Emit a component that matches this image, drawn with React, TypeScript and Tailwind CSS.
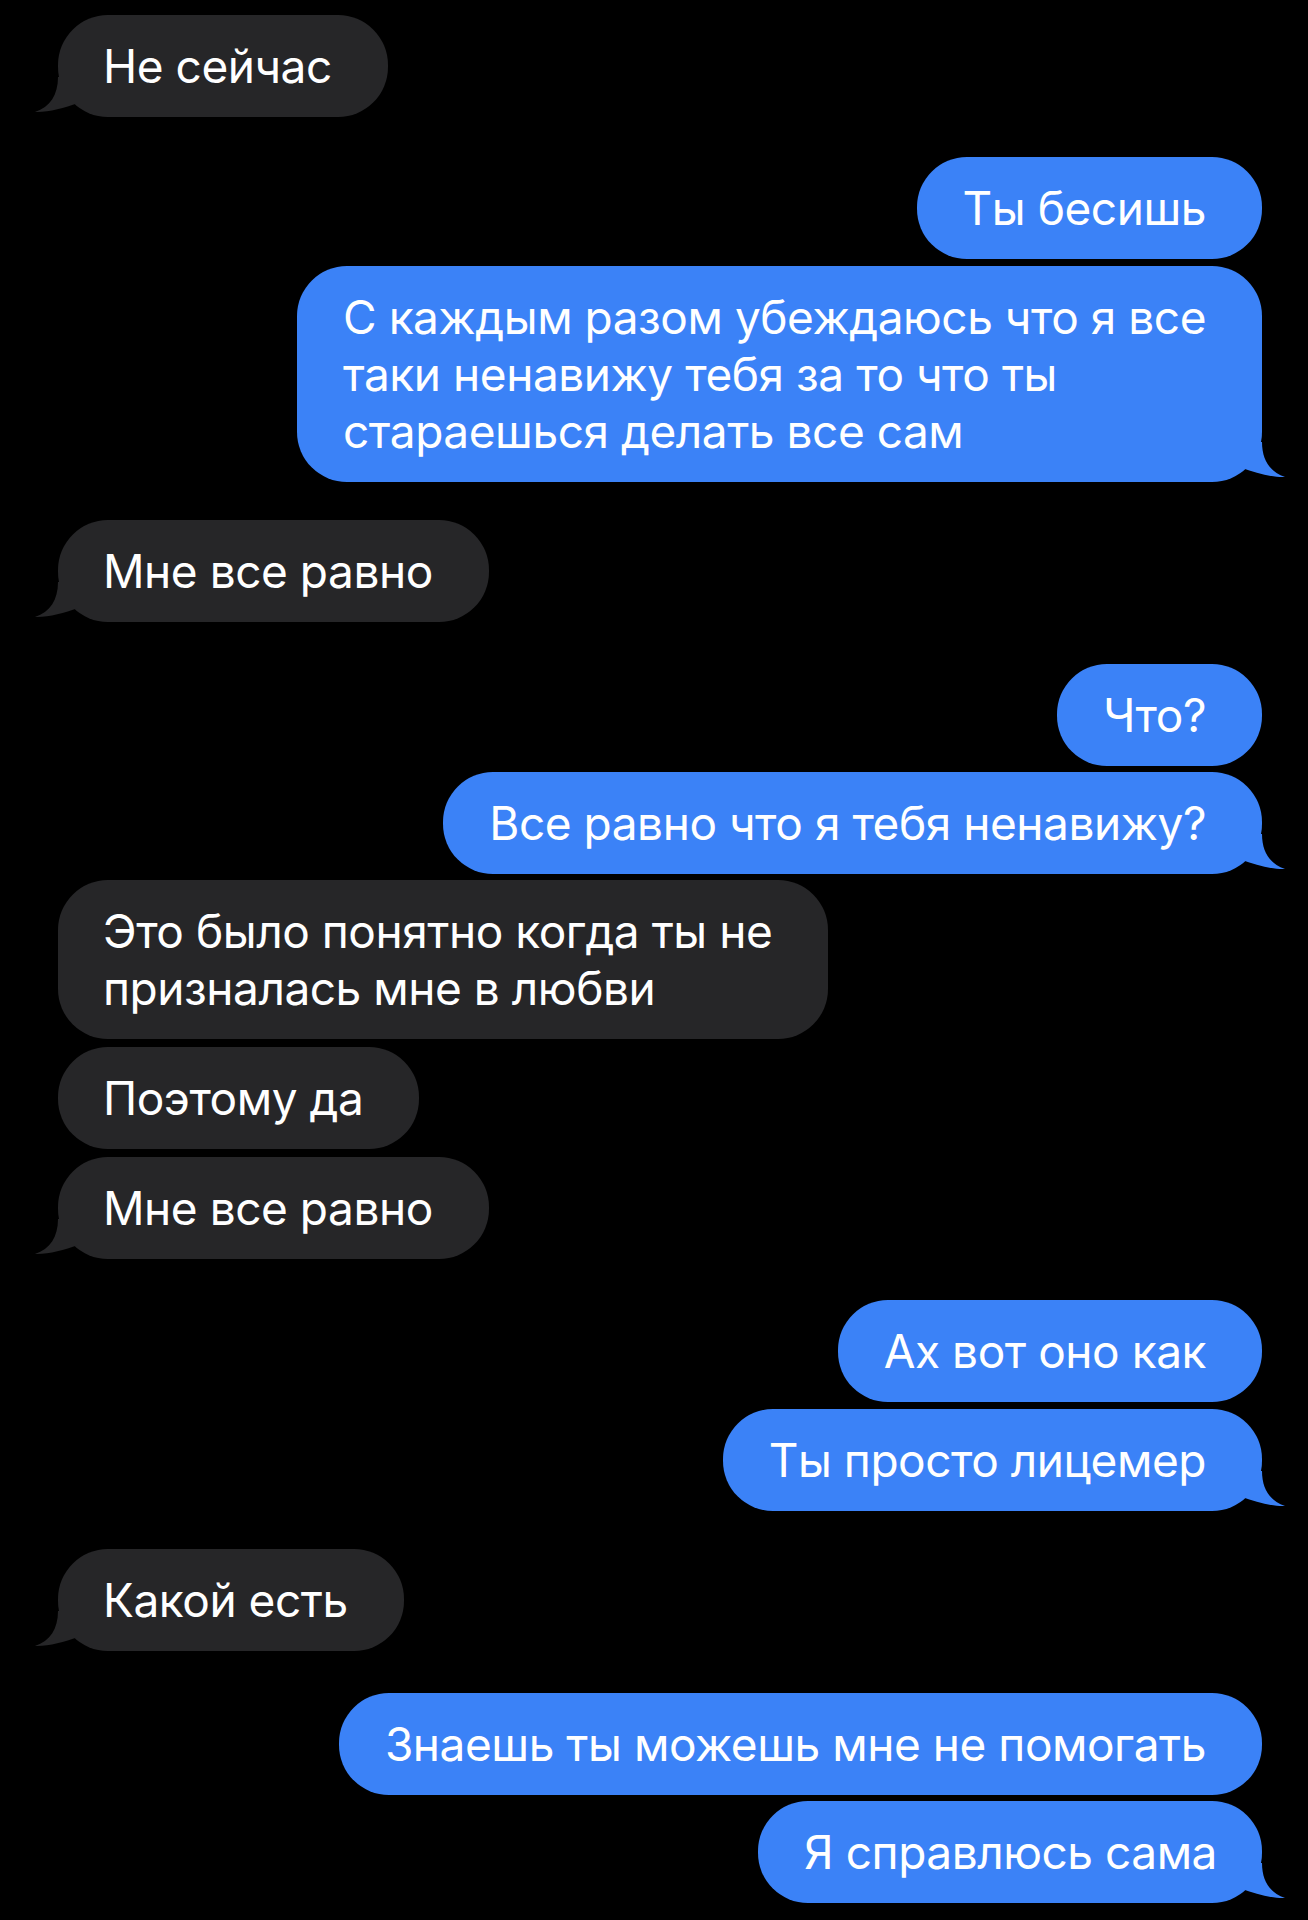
import type { ReactNode } from "react";

type Message = {
  id: number;
  side: "in" | "out";
  lines: string[];
  tail?: boolean;
  gap: string;
  pr?: string;
};

const messages: Message[] = [
  { id: 1, side: "in", lines: ["Не сейчас"], tail: true, gap: "mt-0" },
  { id: 2, side: "out", lines: ["Ты бесишь"], gap: "mt-[40px]" },
  {
    id: 3,
    side: "out",
    lines: [
      "С каждым разом убеждаюсь что я все",
      "таки ненавижу тебя за то что ты",
      "стараешься делать все сам",
    ],
    tail: true,
    gap: "mt-[7px]",
  },
  { id: 4, side: "in", lines: ["Мне все равно"], tail: true, gap: "mt-[38px]" },
  { id: 5, side: "out", lines: ["Что?"], gap: "mt-[42px]" },
  { id: 6, side: "out", lines: ["Все равно что я тебя ненавижу?"], tail: true, gap: "mt-[6px]" },
  {
    id: 7,
    side: "in",
    lines: ["Это было понятно когда ты не", "призналась мне в любви"],
    gap: "mt-[6px]",
  },
  { id: 8, side: "in", lines: ["Поэтому да"], gap: "mt-[8px]" },
  { id: 9, side: "in", lines: ["Мне все равно"], tail: true, gap: "mt-[8px]" },
  { id: 10, side: "out", lines: ["Ах вот оно как"], gap: "mt-[41px]" },
  { id: 11, side: "out", lines: ["Ты просто лицемер"], tail: true, gap: "mt-[7px]" },
  { id: 12, side: "in", lines: ["Какой есть"], tail: true, gap: "mt-[38px]" },
  { id: 13, side: "out", lines: ["Знаешь ты можешь мне не помогать"], gap: "mt-[42px]" },
  { id: 14, side: "out", lines: ["Я справлюсь сама"], tail: true, gap: "mt-[6px]", pr: "pr-[45px]" },
];

function Tail({ side }: { side: "in" | "out" }) {
  return (
    <svg
      viewBox="0 0 50 40"
      className={
        side === "in"
          ? "absolute bottom-0 left-[-24px] h-[40px] w-[50px] fill-[#262628]"
          : "absolute bottom-0 right-[-24px] h-[40px] w-[50px] -scale-x-100 fill-[#3b82f7]"
      }
    >
      <path d="M24 0 C24 18 16 30 1 35 C14 35.5 30 31 44 26 L44 0 Z" />
    </svg>
  );
}

function Bubble({ msg }: { msg: Message }) {
  const content: ReactNode[] = [];
  msg.lines.forEach((line, i) => {
    if (i > 0) content.push(<br key={`br-${i}`} />);
    content.push(<span key={i}>{line}</span>);
  });

  return (
    <div className={`flex ${msg.side === "out" ? "justify-end" : "justify-start"} ${msg.gap}`}>
      <div
        className={`relative whitespace-nowrap rounded-[50px] py-[22.5px] text-[46px] leading-[57px] tracking-[-0.01em] text-white ${
          msg.side === "out" ? "bg-[#3b82f7] pl-[46px]" : "bg-[#262628] pl-[45px]"
        } ${msg.pr ?? "pr-[56px]"}`}
      >
        {msg.tail && <Tail side={msg.side} />}
        <p className="relative">{content}</p>
      </div>
    </div>
  );
}

export default function App() {
  return (
    <div className="min-h-screen bg-black pb-[17px] pl-[58px] pr-[46px] pt-[15px] font-['Inter','Roboto',sans-serif]">
      {messages.map((msg) => (
        <Bubble key={msg.id} msg={msg} />
      ))}
    </div>
  );
}
